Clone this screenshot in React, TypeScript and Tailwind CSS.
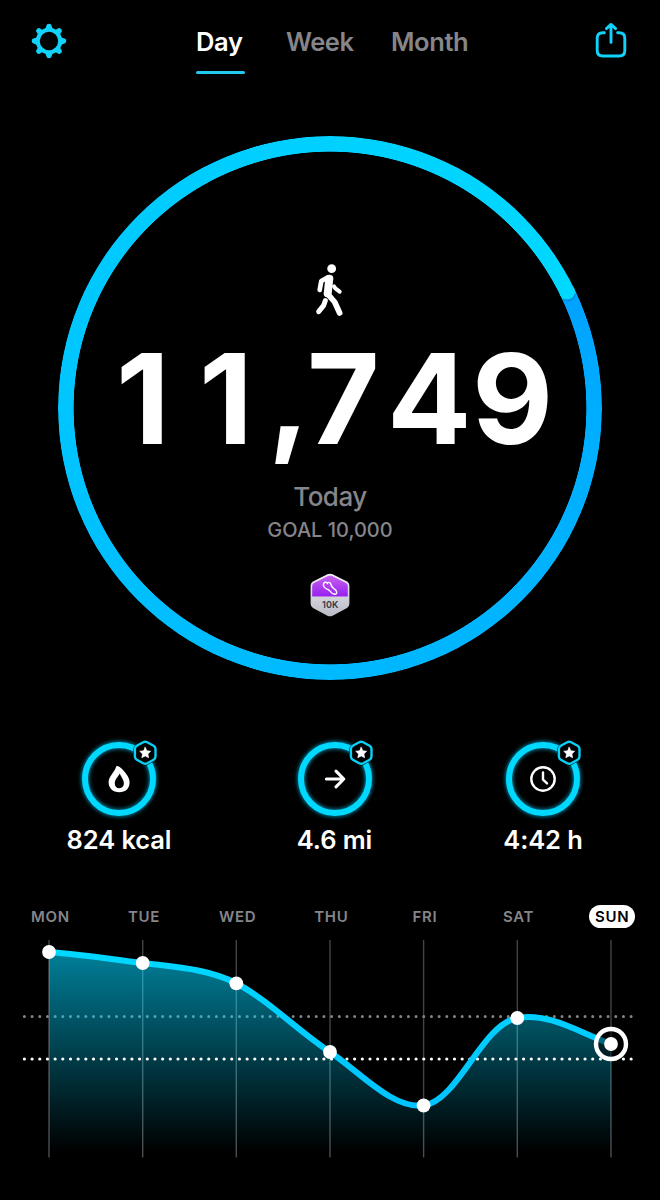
const METRICS = [
  { label: "824 kcal", icon: "flame", className: "w-[104px] ml-[67px]" },
  { label: "4.6 mi", icon: "arrow", className: "w-[104px] ml-[111.5px]" },
  { label: "4:42 h", icon: "clock", className: "w-[104px] ml-[104.5px]" },
];

const DAYS = [
  { name: "MON", x: 49, y: 952 },
  { name: "TUE", x: 142.7, y: 963 },
  { name: "WED", x: 236.3, y: 983.3 },
  { name: "THU", x: 330, y: 1052 },
  { name: "FRI", x: 423.6, y: 1105.5 },
  { name: "SAT", x: 517.3, y: 1018 },
  { name: "SUN", x: 611, y: 1044 },
];

const CURVE =
  "M49 952 C80 954.5 111 959 142.7 963 C174 967 207 968.5 236.3 983.3 C268 1000 297 1030 330 1052 C361 1073 392 1109 423.6 1105.5 C458 1101 482 1024 517.3 1018 C549 1012 580 1033 611 1044";

const HEX =
  "M-2 -10.5 Q0 -11.5 2 -10.5 L8.4 -7 Q10.3 -5.8 10.3 -3.8 V3.8 Q10.3 5.8 8.4 7 L2 10.5 Q0 11.5 -2 10.5 L-8.4 7 Q-10.3 5.8 -10.3 3.8 V-3.8 Q-10.3 -5.8 -8.4 -7Z";

const GearIcon = () => (
  <svg className="h-[36px] w-[36px]" viewBox="-18 -18 36 36" fill="#10d2fa">
    <circle r="11.2" fill="none" stroke="#10d2fa" strokeWidth="4" />
    {[0, 90, 180, 270].map((a) => (
      <path key={a} transform={`rotate(${a})`} d="M-4.8 -11.4 Q-3 -12.6 -2.7 -15 Q-2.4 -17.3 0 -17.3 Q2.4 -17.3 2.7 -15 Q3 -12.6 4.8 -11.4Z" />
    ))}
    {[45, 135, 225, 315].map((a) => (
      <path key={a} transform={`rotate(${a})`} d="M-4.2 -11.4 Q-2.8 -12.4 -2.7 -14.2 Q-2.6 -17 0 -17 Q2.6 -17 2.7 -14.2 Q2.8 -12.4 4.2 -11.4Z" />
    ))}
  </svg>
);

const ShareIcon = () => (
  <svg className="h-[38px] w-[34px]" viewBox="0 0 34 38" fill="none" stroke="#10d2fa" strokeWidth="2.9" strokeLinecap="round" strokeLinejoin="round">
    <path d="M10.4 11.8 H8.8 Q3.2 11.8 3.2 17.3 V29.5 Q3.2 35 8.8 35 H25.2 Q30.8 35 30.8 29.5 V17.3 Q30.8 11.8 25.2 11.8 H23.6" />
    <path d="M17 21.4 V3.6 M12.4 7.6 L17 3.4 L21.6 7.6" />
  </svg>
);

const WalkIcon = () => (
  <svg className="h-[80px] w-[80px]" viewBox="0 0 240 240" fill="none" stroke="#fff" strokeLinecap="round" strokeLinejoin="round">
    <circle cx="125" cy="56" r="13.2" fill="#fff" stroke="none" />
    <path d="M114 82 L94 93 L89 120" strokeWidth="14" />
    <path d="M118 86 L113 130" strokeWidth="24" />
    <path d="M112 131 L134 156 L149 189" strokeWidth="17" />
    <path d="M106 152 L101 166 L86 185" strokeWidth="15" />
    <path d="M132 109 L136 115 L149 125" strokeWidth="12" />
  </svg>
);

const Medal = () => (
  <svg className="h-[46px] w-[42px]" viewBox="0 0 42 46">
    <defs>
      <linearGradient id="medal" x1="0" y1="0" x2="0" y2="1">
        <stop offset="0" stopColor="#c863ee" />
        <stop offset="0.5" stopColor="#9b25ef" />
      </linearGradient>
      <linearGradient id="steel" x1="0" y1="0" x2="0" y2="1">
        <stop offset="0" stopColor="#f4f1f8" />
        <stop offset="1" stopColor="#b9bac4" />
      </linearGradient>
      <clipPath id="upper">
        <rect width="42" height="24.5" />
      </clipPath>
    </defs>
    <path d="M18.4 2.3 Q21 1 23.6 2.3 L38 9.6 Q40.4 11 40.4 13.6 V32 Q40.4 34.6 38 36 L23.6 43.7 Q21 45 18.4 43.7 L4 36 Q1.6 34.6 1.6 32 V13.6 Q1.6 11 4 9.6Z" fill="url(#steel)" />
    <path clipPath="url(#upper)" d="M19 4 Q21 3 23 4 L37 11 Q38.8 12 38.8 14 V31 L21 42 L3.2 31 V14 Q3.2 12 5 11Z" fill="url(#medal)" />
    <path d="M14.7 11.3 C16 9.7 17.6 10.2 18.5 11.2 C19.2 10 21 10 21.5 11.5 C22 14 23.5 15.8 25.5 17.2 C27.6 18.6 28.5 20.8 27 22 C25 22.7 22.5 21.3 21 19.2 C20 17.7 19 17.3 17.5 16.8 C15.2 16 13.6 13.4 14.7 11.3Z" fill="none" stroke="#fff" strokeWidth="1.4" />
    <text x="21.3" y="35.6" textAnchor="middle" className="font-[Inter] text-[9px] font-semibold tracking-[0.2px]" fill="#333643">10K</text>
  </svg>
);

const MetricRing = ({ icon }: { icon: string }) => (
  <svg className="h-[90px] w-[104px]" viewBox="-52 -45 104 90" fill="none" strokeLinecap="round" strokeLinejoin="round">
    <circle r="34" stroke="#00c8f5" strokeWidth="7" className="blur-[2px]" opacity="0.75" />
    <circle r="34" stroke="#00d9ff" strokeWidth="6" />
    {icon === "flame" && (
      <path fill="#fff" fillRule="evenodd" d="M-2.8 -12.6 C-2 -13.8 1 -12.4 4 -9 C8 -4.6 10.6 -1 10.6 3.2 C10.6 9.6 6.5 13.2 0.3 13.2 C-6.2 13.2 -10.4 9.2 -10.4 3.2 C-10.4 -3 -4.6 -6.4 -2.8 -12.6Z M0.6 -5.6 C-0.6 -2.6 -4.2 0.4 -4.2 4.2 C-4.2 7.4 -2.4 9.2 0.4 9.2 C3.2 9.2 4.9 7.4 4.9 4.3 C4.9 1 2.6 -1.6 0.6 -5.6Z" />
    )}
    {icon === "arrow" && <path stroke="#fff" strokeWidth="3.1" d="M-8.6 0 H8.6 M1 -7.8 L8.8 0 L1 7.8" />}
    {icon === "clock" && (
      <g stroke="#fff" strokeWidth="2.4">
        <circle r="11.7" />
        <path d="M0 -6.6 V0.6 L4 4.4" />
      </g>
    )}
    <g transform="translate(26.2 -26.2)">
      <path d={HEX} fill="#000" stroke="#000" strokeWidth="3.2" />
      <path d={HEX} stroke="#0bd0f5" strokeWidth="2.4" />
      <path d="M0 -5.6 L1.7 -2 L5.5 -1.6 L2.7 1.1 L3.4 5 L0 3.1 L-3.4 5 L-2.7 1.1 L-5.5 -1.6 L-1.7 -2Z" fill="#fff" stroke="#fff" strokeWidth="0.6" />
    </g>
  </svg>
);

const Chart = () => (
  <svg className="block h-[265px] w-[660px]" viewBox="0 935 660 265" fill="none">
    <defs>
      <linearGradient id="area" gradientUnits="userSpaceOnUse" x1="0" y1="952" x2="0" y2="1152">
        <stop offset="0" stopColor="#00d4ff" stopOpacity="0.6" />
        <stop offset="1" stopColor="#00d4ff" stopOpacity="0" />
      </linearGradient>
      <linearGradient id="line" gradientUnits="userSpaceOnUse" x1="0" y1="952" x2="0" y2="1106">
        <stop offset="0" stopColor="#00d8ff" />
        <stop offset="1" stopColor="#00c3ff" />
      </linearGradient>
    </defs>
    {DAYS.map((d) => (
      <path key={d.name} d={`M${d.x} 940 V1157.5`} stroke="#424345" strokeWidth="1.4" />
    ))}
    <path d="M24.4 1016.6 H632" stroke="#848489" strokeWidth="3" strokeLinecap="round" strokeDasharray="0 7.68" />
    <path d={`${CURVE} V1157 H49Z`} fill="url(#area)" />
    {DAYS.map((d) => (
      <path key={d.name} d={`M${d.x} ${d.y} V1157.5`} stroke="#fff" strokeOpacity="0.05" strokeWidth="1.4" />
    ))}
    <path d="M24.4 1059 H632" stroke="#fff" strokeWidth="3.2" strokeLinecap="round" strokeDasharray="0 7.68" />
    <path d={CURVE} stroke="url(#line)" strokeWidth="6" />
    <circle cx="611" cy="1044" r="15" fill="#000" fillOpacity="0.5" stroke="#fff" strokeWidth="4.4" />
    {DAYS.map((d) => (
      <circle key={d.name} cx={d.x} cy={d.y} r="6.9" fill="#fff" />
    ))}
  </svg>
);

export default function App() {
  return (
    <div className="h-[1200px] w-[660px] overflow-hidden bg-black font-[Inter,sans-serif] text-white">
      <header className="flex h-[100px] items-start">
        <div className="ml-[31px] mt-[22.5px]">
          <GearIcon />
        </div>
        <nav className="ml-[129px] mt-[26px] flex text-[25.5px] font-[560] leading-8 text-[#85858a]">
          <div className="w-[90px]">
            <span className="tracking-[-0.3px] text-white">Day</span>
            <div className="mt-[12.5px] h-[3px] w-[49px] rounded-full bg-[#22c9ee]" />
          </div>
          <span className="w-[105px] tracking-[-0.5px]">Week</span>
          <span className="w-[90px] tracking-[-0.4px]">Month</span>
        </nav>
        <div className="ml-[112.7px] mt-[21px]">
          <ShareIcon />
        </div>
      </header>

      <section className="relative mx-auto mt-[35.7px] h-[544px] w-[544px]">
        <div className="absolute inset-0 rounded-full bg-[conic-gradient(from_65deg,#00a2ff,#00aeff_8%,#00b8ff_30%,#00c4ff_55%,#00d0ff_80%,#00d8ff)] [mask-image:radial-gradient(circle,transparent_256px,black_256.7px)]" />
        <svg className="absolute inset-0" viewBox="-272 -272 544 544">
          <circle cx="238" cy="-115" r="8.4" fill="#000" fillOpacity="0.12" />
          <circle cx="237.1" cy="-116.3" r="7.8" fill="#00d8ff" />
        </svg>
        <div className="relative flex flex-col items-center pt-[114px]">
          <WalkIcon />
          <div className="-mt-[5.7px] flex h-[138px] w-[436px] pl-1 text-[125px] font-bold leading-[150px]">
            <span className="w-[83px]">1</span>
            <span className="w-[69px]">1</span>
            <span className="-mt-[4px] w-[39px]">,</span>
            <span className="w-[80px]">7</span>
            <span className="w-[85px]">4</span>
            <span className="w-[76px]">9</span>
          </div>
          <div className="mt-[19px] text-[26px] font-[540] leading-8 tracking-[-0.5px] text-[#85858a]">Today</div>
          <div className="mt-[5px] text-[20px] font-[540] leading-6 text-[#85858a]">GOAL 10,000</div>
          <div className="mt-[30px]">
            <Medal />
          </div>
        </div>
      </section>

      <section className="mt-[54.3px] flex">
        {METRICS.map((m) => (
          <div key={m.label} className={`flex flex-col items-center ${m.className}`}>
            <MetricRing icon={m.icon} />
            <div className="mt-[0.5px] whitespace-nowrap text-[25.5px] font-[560] leading-8 tracking-[-0.1px]">{m.label}</div>
          </div>
        ))}
      </section>

      <section className="mt-[48.5px]">
        <div className="flex h-[30px] items-start pl-[3.5px]">
          {DAYS.map((d) => (
            <div key={d.name} className="flex w-[93.66px] justify-center text-[15px] font-[560] leading-[23px] tracking-[0.7px] text-[#85858a]">
              {d.name === "SUN" ? <span className="rounded-full bg-white px-[6px] font-semibold text-black">{d.name}</span> : d.name}
            </div>
          ))}
        </div>
        <Chart />
      </section>
    </div>
  );
}
